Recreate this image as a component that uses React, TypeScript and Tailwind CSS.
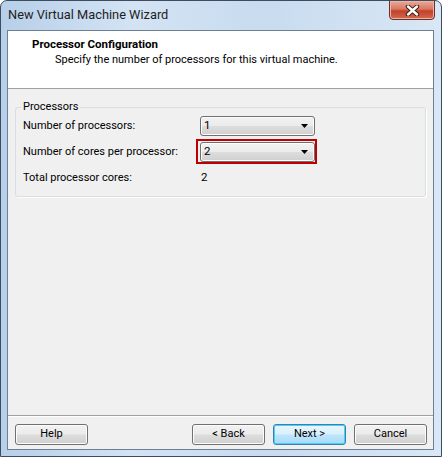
import React from "react";

function ComboBox({ value }: { value: string }) {
  return (
    <div className="relative flex h-[20px] w-[115px] items-center rounded-[3px] border border-[#707070] bg-[linear-gradient(#f2f2f2_0%,#ebebeb_48%,#dddddd_52%,#cfcfcf_100%)] pl-[3px] shadow-[inset_0_0_0_1px_#fcfcfc]">
      <span className="text-[11.5px] leading-none text-black">{value}</span>
      <svg className="absolute right-[6px] top-[7px]" width="7" height="4" viewBox="0 0 7 4">
        <path d="M0 0 H7 L3.5 4 Z" fill="#000" />
      </svg>
    </div>
  );
}

function WinButton({ label, isDefault }: { label: string; isDefault?: boolean }) {
  return (
    <button
      type="button"
      className={
        isDefault
          ? "flex h-[21px] w-[73px] items-center justify-center rounded-[3px] border border-[#3c7fb1] bg-[linear-gradient(#eaf6fd_0%,#d9f0fc_48%,#bee6fd_52%,#a7d9f5_100%)] text-[11px] text-black shadow-[inset_0_0_0_1px_#48d0f8]"
          : "flex h-[21px] w-[73px] items-center justify-center rounded-[3px] border border-[#707070] bg-[linear-gradient(#f2f2f2_0%,#ebebeb_48%,#dddddd_52%,#cfcfcf_100%)] text-[11px] text-black shadow-[inset_0_0_0_1px_#fcfcfc]"
      }
    >
      {label}
    </button>
  );
}

export default function App() {
  return (
    <div className="flex h-[457px] w-[442px] flex-col overflow-hidden rounded-t-[7px] border border-[#3d4d5e] bg-[linear-gradient(90deg,#b7cfe9_0%,#d3e3f4_30%,#c8dbef_60%,#d9e7f6_100%)] font-[Roboto,sans-serif]">
      {/* title bar */}
      <div className="flex h-[29px] items-start justify-between">
        <span className="pl-[7px] pt-[6px] text-[12.8px] leading-[16px] text-[#1e1e1e]">
          New Virtual Machine Wizard
        </span>
        <div className="mr-[6px] mt-[-1px] flex h-[20px] w-[46px] items-center justify-center rounded-b-[4px] border border-[#6b2f25] bg-[linear-gradient(#e9a99b_0%,#d9775f_45%,#c2412a_55%,#d26a4e_100%)] shadow-[inset_0_0_0_1px_#f0b4a6]">
          <svg width="15" height="11" viewBox="0 0 15 11">
            <path d="M3 1.5 L12 9.5 M12 1.5 L3 9.5" stroke="#3b1c16" strokeWidth="4.4" strokeLinecap="round" fill="none" />
            <path d="M3 1.5 L12 9.5 M12 1.5 L3 9.5" stroke="#fff" strokeWidth="2.4" strokeLinecap="round" fill="none" />
          </svg>
        </div>
      </div>

      {/* client area */}
      <div className="ml-[6px] mr-[7px] flex h-[420px] flex-col border border-[#6d7f93] bg-[#f0f0f0]">
        <div className="h-[58px] border-b border-[#a0a0a0] bg-white pl-[24px] pt-[5px]">
          <div className="text-[11.5px] font-bold leading-[16px] text-black">Processor Configuration</div>
          <div className="pl-[23px] text-[11px] leading-[16px] text-black">
            Specify the number of processors for this virtual machine.
          </div>
        </div>

        <div className="flex-1 px-[7px] pt-[10px]">
          <fieldset className="rounded-[3px] border border-[#d5dfe5] px-[7px] pb-[8px] shadow-[1px_1px_0_#fff]">
            <legend className="ml-[-2px] px-[2px] text-[11px] leading-[16px] text-black">Processors</legend>
            <div className="mt-[1px] flex h-[20px] items-center">
              <span className="w-[177px] whitespace-nowrap text-[11px] text-black">Number of processors:</span>
              <ComboBox value="1" />
            </div>
            <div className="mt-[6px] flex h-[20px] items-center">
              <span className="w-[177px] whitespace-nowrap text-[11px] text-black">Number of cores per processor:</span>
              <div className="relative">
                <ComboBox value="2" />
                <div className="pointer-events-none absolute -bottom-[2px] -left-[4px] -right-[2px] -top-[3px] border-2 border-[#c00000]" />
              </div>
            </div>
            <div className="mt-[6px] flex h-[20px] items-center">
              <span className="w-[178px] whitespace-nowrap text-[11px] text-black">Total processor cores:</span>
              <span className="text-[11.5px] text-black">2</span>
            </div>
          </fieldset>
        </div>

        <div className="flex items-center border-t border-[#a0a0a0] pb-[4px] pl-[7px] pr-[6px] pt-[8px] shadow-[inset_0_1px_0_#fff]">
          <WinButton label="Help" />
          <div className="ml-auto flex gap-[8px]">
            <WinButton label="< Back" />
            <WinButton label="Next >" isDefault />
            <WinButton label="Cancel" />
          </div>
        </div>
      </div>
    </div>
  );
}
